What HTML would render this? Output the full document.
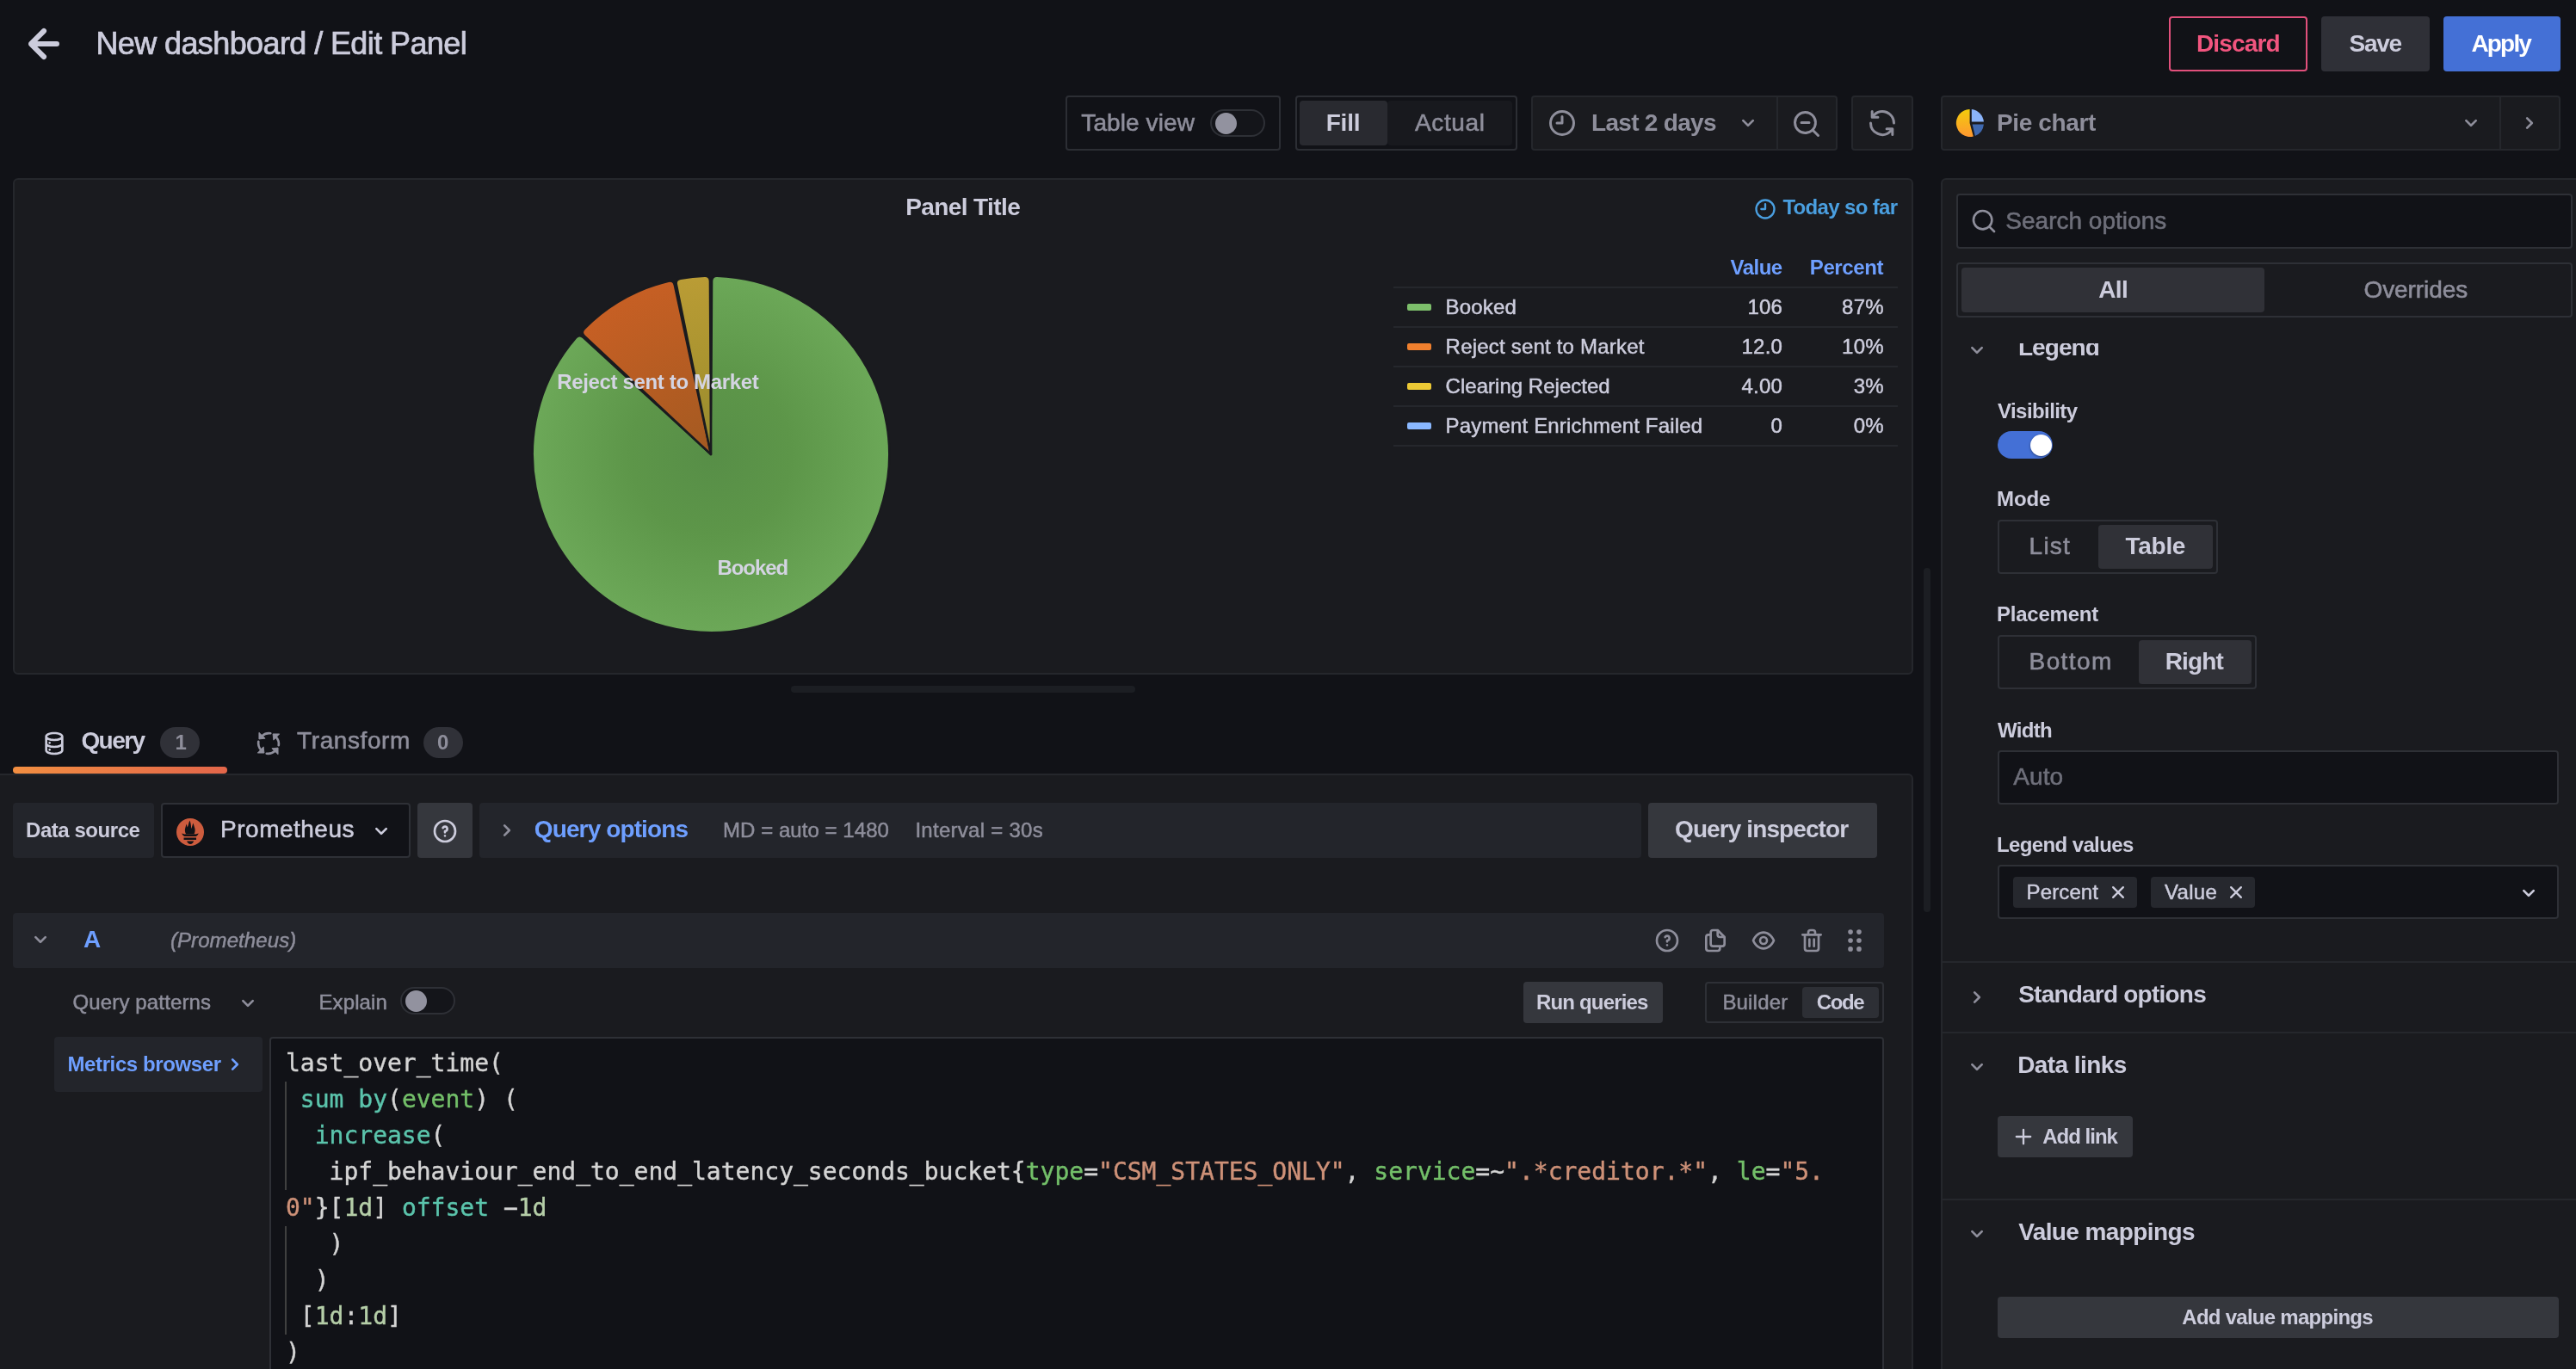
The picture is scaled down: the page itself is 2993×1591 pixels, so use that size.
<!DOCTYPE html>
<html lang="en">
<head>
<meta charset="utf-8">
<title>New dashboard / Edit Panel - Grafana</title>
<style>
html,body{margin:0;padding:0;background:#111217;}
body{width:2993px;height:1591px;overflow:hidden;position:relative;font-family:"Liberation Sans",sans-serif;color:#ccccdc;}
#app{will-change:transform;position:absolute;left:0;top:0;width:2993px;height:1591px;overflow:hidden;}
.b{position:absolute;box-sizing:border-box;}
.i{position:absolute;display:block;overflow:visible;}
.t{-webkit-text-stroke:0.02em currentColor;position:absolute;white-space:pre;line-height:1;margin:0;font-weight:400;font-family:"Liberation Sans",sans-serif;color:#ccccdc;}
.m{font-weight:700;-webkit-text-stroke:0;}
.bd{font-weight:700;-webkit-text-stroke:0;}
.it{font-style:italic;}
.mo{font-family:"DejaVu Sans Mono","Liberation Mono",monospace;}
.code{position:absolute;margin:0;font-family:"DejaVu Sans Mono","Liberation Mono",monospace;font-size:28px;line-height:42px;color:#d4d4d4;white-space:pre;letter-spacing:0;-webkit-text-stroke:0.4px currentColor;}
.code div{height:42px;}
.mn{display:inline-block;transform:scaleX(2);}

</style>
</head>
<body>
<div id="app">
<svg class="i" style="left:15px;top:15px" width="72" height="72" viewBox="0 0 24 24" fill="#ccccdc" ><path d="M17,11H9.41l3.3-3.29a1,1,0,1,0-1.42-1.42l-5,5a1,1,0,0,0-.21.33,1,1,0,0,0,0,.76,1,1,0,0,0,.21.33l5,5a1,1,0,0,0,1.42,0,1,1,0,0,0,0-1.42L9.41,13H17a1,1,0,0,0,0-2Z"/></svg>
<h1 class="t" style="left:111.4px;top:32.5px;font-size:36px;letter-spacing:-0.60px;">New dashboard / Edit Panel</h1>
<div class="b" style="left:2520px;top:19px;width:161px;height:64px;border:2px solid #e2507c;border-radius:4px;"></div>
<span class="t m" style="left:2552.0px;top:36.6px;font-size:28px;letter-spacing:-0.85px;color:#f2557f;">Discard</span>
<div class="b" style="left:2697px;top:19px;width:126px;height:64px;background:#2f3037;border-radius:4px;"></div>
<span class="t m" style="left:2729.6px;top:36.6px;font-size:28px;letter-spacing:-1.34px;">Save</span>
<div class="b" style="left:2839px;top:19px;width:136px;height:64px;background:#4470d6;border-radius:4px;"></div>
<span class="t m" style="left:2871.5px;top:36.6px;font-size:28px;letter-spacing:-1.85px;color:#ffffff;">Apply</span>
<div class="b" style="left:1238px;top:111px;width:250px;height:64px;border:2px solid #2c2e34;border-radius:4px;"></div>
<span class="t" style="left:1256.3px;top:128.9px;font-size:28px;letter-spacing:0.10px;color:#8e8e9b;">Table view</span>
<div class="b" style="left:1406px;top:127px;width:64px;height:32px;background:#14151a;border:2px solid #2e3036;border-radius:16px;"></div>
<div class="b" style="left:1411.5px;top:130.5px;width:25px;height:25px;border-radius:50%;background:#92929f"></div>
<div class="b" style="left:1505px;top:111px;width:258px;height:64px;border:2px solid #2c2e34;border-radius:4px;"></div>
<div class="b" style="left:1510px;top:117px;width:102px;height:52px;background:#292a30;border-radius:4px;"></div>
<div class="b" style="left:1612px;top:117px;width:145px;height:52px;background:#18191e;border-radius:4px;"></div>
<span class="t m" style="left:1540.7px;top:128.9px;font-size:28px;letter-spacing:-0.22px;">Fill</span>
<span class="t" style="left:1644.0px;top:128.9px;font-size:28px;letter-spacing:0.63px;color:#8e8e9b;">Actual</span>
<div class="b" style="left:1779px;top:111px;width:287px;height:64px;background:#1a1b1f;border:2px solid #25272c;border-radius:4px 0 0 4px;"></div>
<div class="b" style="left:2066px;top:111px;width:69px;height:64px;background:#1a1b1f;border:2px solid #25272c;border-radius:0 4px 4px 0;border-left:none;"></div>
<svg class="i" style="left:1797.0px;top:125.0px" width="36" height="36" viewBox="0 0 24 24" fill="#8e8e9b" ><path d="M12,2A10,10,0,1,0,22,12,10.01114,10.01114,0,0,0,12,2Zm0,18a8,8,0,1,1,8-8A8.00917,8.00917,0,0,1,12,20ZM12,6a.99974.99974,0,0,0-1,1v4H8a1,1,0,0,0,0,2h4a.99974.99974,0,0,0,1-1V7A.99974.99974,0,0,0,12,6Z"/></svg>
<span class="t m" style="left:1849.0px;top:128.9px;font-size:28px;letter-spacing:-0.70px;color:#8e8e9b;">Last 2 days</span>
<svg class="i" style="left:2015.0px;top:127.0px" width="32" height="32" viewBox="0 0 24 24" fill="#8e8e9b" ><path d="M17,9.17a1,1,0,0,0-1.41,0L12,12.71,8.46,9.17a1,1,0,0,0-1.41,0,1,1,0,0,0,0,1.42l4.24,4.24a1,1,0,0,0,1.42,0L17,10.59A1,1,0,0,0,17,9.17Z"/></svg>
<svg class="i" style="left:2081.0px;top:125.5px" width="36" height="36" viewBox="0 0 24 24" fill="#8e8e9b" ><path d="M21.71,20.29,18,16.61A9,9,0,1,0,16.61,18l3.68,3.68a1,1,0,0,0,1.42,0A1,1,0,0,0,21.71,20.29ZM11,18a7,7,0,1,1,7-7A7,7,0,0,1,11,18Zm3-8H8a1,1,0,0,0,0,2h6a1,1,0,0,0,0-2Z"/></svg>
<div class="b" style="left:2151px;top:111px;width:72px;height:64px;background:#1a1b1f;border:2px solid #25272c;border-radius:4px;"></div>
<svg class="i" style="left:2169.0px;top:125.0px" width="36" height="36" viewBox="0 0 24 24" fill="#8e8e9b" ><path d="M19.91,15.51H15.38a1,1,0,0,0,0,2h2.4A8,8,0,0,1,4,12a1,1,0,0,0-2,0,10,10,0,0,0,16.88,7.23V21a1,1,0,0,0,2,0V16.5A1,1,0,0,0,19.91,15.51ZM12,2A10,10,0,0,0,5.12,4.77V3a1,1,0,0,0-2,0V7.5a1,1,0,0,0,1,1h4.5a1,1,0,0,0,0-2H6.22A8,8,0,0,1,20,12a1,1,0,0,0,2,0A10,10,0,0,0,12,2Z"/></svg>
<div class="b" style="left:2255px;top:111px;width:651px;height:64px;background:#1a1b1f;border:2px solid #25272c;border-radius:4px 0 0 4px;"></div>
<div class="b" style="left:2906px;top:111px;width:69px;height:64px;background:#1a1b1f;border:2px solid #25272c;border-radius:0 4px 4px 0;border-left:none;"></div>
<svg class="i" style="left:2273px;top:127px" width="32" height="32" viewBox="0 0 32 32">
<defs><linearGradient id="pg" x1="0" y1="0" x2="0" y2="1"><stop offset="0" stop-color="#f2cc0c"/><stop offset="1" stop-color="#ff9830"/></linearGradient></defs>
<path d="M15.600,16 L15.600,0 A16,16 0 1 0 19.800,31.500 Z" fill="url(#pg)"/>
<path d="M17.800,14.600 L17.800,0.100 A16,16 0 0 1 31.900,14.600 Z" fill="#8ab4fa"/>
<path d="M18.600,17.500 L31.900,17.500 A16,16 0 0 1 21.800,30.900 Z" fill="#3f69b0"/>
</svg>
<span class="t m" style="left:2320.0px;top:128.9px;font-size:28px;letter-spacing:-0.37px;color:#8e8e9b;">Pie chart</span>
<svg class="i" style="left:2854.6px;top:127.0px" width="32" height="32" viewBox="0 0 24 24" fill="#8e8e9b" ><path d="M17,9.17a1,1,0,0,0-1.41,0L12,12.71,8.46,9.17a1,1,0,0,0-1.41,0,1,1,0,0,0,0,1.42l4.24,4.24a1,1,0,0,0,1.42,0L17,10.59A1,1,0,0,0,17,9.17Z"/></svg>
<svg class="i" style="left:2922.8px;top:127.0px" width="32" height="32" viewBox="0 0 24 24" fill="#8e8e9b" ><path d="M14.83,11.29,10.59,7.05a1,1,0,0,0-1.42,0,1,1,0,0,0,0,1.41L12.71,12,9.17,15.54a1,1,0,0,0,0,1.41,1,1,0,0,0,.71.29,1,1,0,0,0,.71-.29l4.24-4.24A1,1,0,0,0,14.83,11.29Z"/></svg>
<div class="b" style="left:15px;top:207px;width:2208px;height:577px;background:#1a1b1f;border:2px solid #25272c;border-radius:6px;"></div>
<h2 class="t m" style="left:1052.2px;top:226.7px;font-size:28px;letter-spacing:-0.60px;">Panel Title</h2>
<svg class="i" style="left:2037.0px;top:229.0px" width="28" height="28" viewBox="0 0 24 24" fill="#4a9fe0" ><path d="M12,2A10,10,0,1,0,22,12,10.01114,10.01114,0,0,0,12,2Zm0,18a8,8,0,1,1,8-8A8.00917,8.00917,0,0,1,12,20ZM12,6a.99974.99974,0,0,0-1,1v4H8a1,1,0,0,0,0,2h4a.99974.99974,0,0,0,1-1V7A.99974.99974,0,0,0,12,6Z"/></svg>
<span class="t m" style="left:2071.4px;top:228.7px;font-size:24px;letter-spacing:-0.66px;color:#4a9fe0;">Today so far</span>
<svg class="i" style="left:606px;top:308px" width="440" height="440" viewBox="606 308 440 440"><defs><radialGradient id="g1" gradientUnits="userSpaceOnUse" cx="826" cy="528" r="207.2"><stop offset="0" stop-color="#578e47"/><stop offset="0.45" stop-color="#5d9649"/><stop offset="1" stop-color="#6ca858"/></radialGradient><radialGradient id="g2" gradientUnits="userSpaceOnUse" cx="826" cy="528" r="207.2"><stop offset="0" stop-color="#a35a21"/><stop offset="0.45" stop-color="#b35c22"/><stop offset="1" stop-color="#c65f24"/></radialGradient><radialGradient id="g3" gradientUnits="userSpaceOnUse" cx="826" cy="528" r="207.2"><stop offset="0" stop-color="#948a2f"/><stop offset="0.45" stop-color="#a8932f"/><stop offset="1" stop-color="#ba9c35"/></radialGradient></defs><g stroke="#1a1b1f" stroke-width="2.4" stroke-linejoin="round"><path d="M826,528 L827.12,326.80 Q827.16,320.80 833.16,320.92 A207.2,207.2 0 1 1 669.17,392.59 Q673.16,388.11 677.58,392.16 Z" fill="url(#g1)"/><path d="M826,528 L679.11,390.51 Q674.73,386.41 678.89,382.09 A207.2,207.2 0 0 1 776.64,326.77 Q782.48,325.42 783.74,331.29 Z" fill="url(#g2)"/><path d="M826,528 L785.94,330.83 Q784.75,324.95 790.65,323.84 A207.2,207.2 0 0 1 818.84,320.92 Q824.84,320.80 824.88,326.80 Z" fill="url(#g3)"/></g></svg>
<span class="t m" style="left:647.3px;top:432.3px;font-size:24px;letter-spacing:-0.35px;color:#d4d4e2;">Reject sent to Market</span>
<span class="t m" style="left:833.5px;top:647.5px;font-size:24px;letter-spacing:-1.07px;color:#d4d4e2;">Booked</span>
<span class="t m" style="left:2010.5px;top:298.7px;font-size:24px;letter-spacing:-0.51px;color:#6e9fff;">Value</span>
<span class="t m" style="left:2102.8px;top:298.7px;font-size:24px;letter-spacing:-0.39px;color:#6e9fff;">Percent</span>
<div class="b" style="left:1619px;top:333px;width:586px;height:2px;background:#25272c;"></div>
<div class="b" style="left:1635px;top:353px;width:28px;height:8px;background:#7dbf6b;border-radius:2px;"></div>
<span class="t" style="left:1679.6px;top:344.7px;font-size:24px;letter-spacing:0.19px;">Booked</span>
<span class="t" style="left:2030.4px;top:344.7px;font-size:24px;letter-spacing:0.24px;">106</span>
<span class="t" style="left:2140.1px;top:344.7px;font-size:24px;letter-spacing:0.24px;">87%</span>
<div class="b" style="left:1619px;top:379px;width:586px;height:2px;background:#25272c;"></div>
<div class="b" style="left:1635px;top:399px;width:28px;height:8px;background:#f0802e;border-radius:2px;"></div>
<span class="t" style="left:1679.6px;top:390.7px;font-size:24px;letter-spacing:0.20px;">Reject sent to Market</span>
<span class="t" style="left:2023.5px;top:390.7px;font-size:24px;letter-spacing:0.24px;">12.0</span>
<span class="t" style="left:2140.1px;top:390.7px;font-size:24px;letter-spacing:0.24px;">10%</span>
<div class="b" style="left:1619px;top:425px;width:586px;height:2px;background:#25272c;"></div>
<div class="b" style="left:1635px;top:445px;width:28px;height:8px;background:#ecc935;border-radius:2px;"></div>
<span class="t" style="left:1679.6px;top:436.7px;font-size:24px;letter-spacing:0.02px;">Clearing Rejected</span>
<span class="t" style="left:2023.5px;top:436.7px;font-size:24px;letter-spacing:0.24px;">4.00</span>
<span class="t" style="left:2153.7px;top:436.7px;font-size:24px;letter-spacing:0.24px;">3%</span>
<div class="b" style="left:1619px;top:471px;width:586px;height:2px;background:#25272c;"></div>
<div class="b" style="left:1635px;top:491px;width:28px;height:8px;background:#8ab8ff;border-radius:2px;"></div>
<span class="t" style="left:1679.6px;top:482.7px;font-size:24px;letter-spacing:0.15px;">Payment Enrichment Failed</span>
<span class="t" style="left:2057.6px;top:482.7px;font-size:24px;">0</span>
<span class="t" style="left:2153.7px;top:482.7px;font-size:24px;letter-spacing:0.24px;">0%</span>
<div class="b" style="left:1619px;top:517px;width:586px;height:2px;background:#25272c;"></div>
<div class="b" style="left:919px;top:797px;width:400px;height:8px;background:#1c1e23;border-radius:4px;"></div>
<div class="b" style="left:2235px;top:660px;width:8px;height:400px;background:#1c1e23;border-radius:4px;"></div>
<svg class="i" style="left:47.2px;top:847.5px" width="32" height="32" viewBox="0 0 24 24" fill="#ccccdc" ><path d="M8,16.5a1,1,0,1,0,1,1A1,1,0,0,0,8,16.5ZM12,2C8,2,4,3.37,4,6V18c0,2.63,4,4,8,4s8-1.37,8-4V6C20,3.37,16,2,12,2Zm6,16c0,.71-2.28,2-6,2s-6-1.29-6-2V14.73A13.16,13.16,0,0,0,12,16a13.16,13.16,0,0,0,6-1.27Zm0-6c0,.71-2.28,2-6,2s-6-1.29-6-2V8.73A13.16,13.16,0,0,0,12,10a13.16,13.16,0,0,0,6-1.27ZM12,8C8.28,8,6,6.71,6,6s2.28-2,6-2,6,1.29,6,2S15.72,8,12,8ZM8,10.5a1,1,0,1,0,1,1A1,1,0,0,0,8,10.5Z"/></svg>
<span class="t m" style="left:94.4px;top:847.1px;font-size:28px;letter-spacing:-1.56px;">Query</span>
<div class="b" style="left:186px;top:845px;width:46px;height:36px;background:#303138;border-radius:18px;"></div>
<span class="t m" style="left:203.5px;top:851.2px;font-size:24px;color:#8e8e9b;">1</span>
<div class="b" style="left:15px;top:891px;width:249px;height:8px;border-radius:4px;background:linear-gradient(270deg,#e3664a 0%,#f28e41 100%)"></div>
<svg class="i" style="left:296px;top:848px;color:#8e8e9b" width="32" height="32" viewBox="0 0 24 24"><g transform="rotate(0 12 12)"><path d="M13.7,3.2A9,9,0,0,0,6.4,5.4" fill="none" stroke="currentColor" stroke-width="2" stroke-linecap="round"/><path d="M3.7,2.5V8.2L9.1,7.6Z" fill="currentColor" stroke="currentColor" stroke-width="0.7" stroke-linejoin="round"/></g><g transform="rotate(90 12 12)"><path d="M13.7,3.2A9,9,0,0,0,6.4,5.4" fill="none" stroke="currentColor" stroke-width="2" stroke-linecap="round"/><path d="M3.7,2.5V8.2L9.1,7.6Z" fill="currentColor" stroke="currentColor" stroke-width="0.7" stroke-linejoin="round"/></g><g transform="rotate(180 12 12)"><path d="M13.7,3.2A9,9,0,0,0,6.4,5.4" fill="none" stroke="currentColor" stroke-width="2" stroke-linecap="round"/><path d="M3.7,2.5V8.2L9.1,7.6Z" fill="currentColor" stroke="currentColor" stroke-width="0.7" stroke-linejoin="round"/></g><g transform="rotate(270 12 12)"><path d="M13.7,3.2A9,9,0,0,0,6.4,5.4" fill="none" stroke="currentColor" stroke-width="2" stroke-linecap="round"/><path d="M3.7,2.5V8.2L9.1,7.6Z" fill="currentColor" stroke="currentColor" stroke-width="0.7" stroke-linejoin="round"/></g></svg>
<span class="t" style="left:345.1px;top:847.1px;font-size:28px;letter-spacing:0.58px;color:#8e8e9b;">Transform</span>
<div class="b" style="left:492px;top:845px;width:46px;height:36px;background:#303138;border-radius:18px;"></div>
<span class="t m" style="left:508.0px;top:851.2px;font-size:24px;color:#8e8e9b;">0</span>
<div class="b" style="left:-10px;top:899px;width:2233px;height:721px;background:#1a1b1f;border:2px solid #25272c;border-radius:6px;"></div>
<div class="b" style="left:15px;top:933px;width:164px;height:64px;background:#23252b;border-radius:4px;"></div>
<span class="t m" style="left:30.0px;top:953.1px;font-size:24px;letter-spacing:-0.45px;">Data source</span>
<div class="b" style="left:187px;top:933px;width:290px;height:64px;background:#111217;border:2px solid #2e3036;border-radius:4px;"></div>
<svg class="i" style="left:205px;top:950.800px" width="32" height="32" viewBox="0 0 32 32">
<circle cx="16" cy="16" r="16" fill="#cd5c3e"/>
<g fill="#111217">
<path d="M15.5,2.5C16.2,4.500,16.600,6,16.900,8.500C17,9.500,17.200,11.500,17.500,12C18,10,18.600,7.500,19.400,5.400C20,7.500,20.800,9.500,21.300,11.500C21.800,13.500,21.800,16,20.600,18H11C9.800,16,9.600,13.500,10.200,11.500C10.700,9.800,11.100,8,11.500,6.400C12,7.500,12.300,9,12.600,10.500C13.200,9.600,13.600,8.500,13.900,7.300C14.300,5.700,14.800,4,15.500,2.500Z"/>
<path d="M6.250,17.600C8,18.400,9.500,18.600,10.800,18.200H20.900C22.500,18.600,24,18.400,25.700,17.600C25,19.500,24,20.900,22.500,20.900H9.500C8,20.900,7,19.500,6.250,17.600Z"/>
<rect x="8.550" y="22.500" width="14.450" height="2.500"/>
<path d="M12.200,26.600H20.100C19.600,28.800,18,30.100,16.150,30.100C14.300,30.100,12.700,28.800,12.200,26.600Z"/>
</g>
</svg>
<span class="t" style="left:256.1px;top:950.3px;font-size:28px;letter-spacing:0.49px;">Prometheus</span>
<svg class="i" style="left:427.0px;top:950.0px" width="32" height="32" viewBox="0 0 24 24" fill="#ccccdc" ><path d="M17,9.17a1,1,0,0,0-1.41,0L12,12.71,8.46,9.17a1,1,0,0,0-1.41,0,1,1,0,0,0,0,1.42l4.24,4.24a1,1,0,0,0,1.42,0L17,10.59A1,1,0,0,0,17,9.17Z"/></svg>
<div class="b" style="left:485px;top:933px;width:64px;height:64px;background:#35373d;border-radius:4px;"></div>
<svg class="i" style="left:501.0px;top:949.5px" width="32" height="32" viewBox="0 0 24 24" fill="#ccccdc" ><path d="M11.29,15.29a1.58,1.58,0,0,0-.12.15.76.76,0,0,0-.09.18.64.64,0,0,0-.06.18,1.36,1.36,0,0,0,0,.2.84.84,0,0,0,.08.38.9.9,0,0,0,.54.54.94.94,0,0,0,.76,0,.9.9,0,0,0,.54-.54A1,1,0,0,0,13,16a1,1,0,0,0-.29-.71A1,1,0,0,0,11.29,15.29ZM12,2A10,10,0,1,0,22,12,10,10,0,0,0,12,2Zm0,18a8,8,0,1,1,8-8A8,8,0,0,1,12,20ZM12,7A3,3,0,0,0,9.4,8.5a1,1,0,1,0,1.73,1A1,1,0,0,1,12,9a1,1,0,0,1,0,2,1,1,0,0,0-1,1v1a1,1,0,0,0,2,0v-.18A3,3,0,0,0,12,7Z"/></svg>
<div class="b" style="left:557px;top:933px;width:1350px;height:64px;background:#23252b;border-radius:4px;"></div>
<svg class="i" style="left:573.0px;top:949.0px" width="32" height="32" viewBox="0 0 24 24" fill="#8e8e9b" ><path d="M14.83,11.29,10.59,7.05a1,1,0,0,0-1.42,0,1,1,0,0,0,0,1.41L12.71,12,9.17,15.54a1,1,0,0,0,0,1.41,1,1,0,0,0,.71.29,1,1,0,0,0,.71-.29l4.24-4.24A1,1,0,0,0,14.83,11.29Z"/></svg>
<span class="t m" style="left:620.8px;top:949.9px;font-size:28px;letter-spacing:-0.88px;color:#6e9fff;">Query options</span>
<span class="t" style="left:840.0px;top:952.9px;font-size:24px;letter-spacing:0.05px;color:#8e8e9b;">MD = auto = 1480</span>
<span class="t" style="left:1063.4px;top:952.9px;font-size:24px;letter-spacing:0.27px;color:#8e8e9b;">Interval = 30s</span>
<div class="b" style="left:1915px;top:933px;width:266px;height:64px;background:#35373d;border-radius:4px;"></div>
<span class="t m" style="left:1946.0px;top:949.9px;font-size:28px;letter-spacing:-0.90px;">Query inspector</span>
<div class="b" style="left:15px;top:1061px;width:2174px;height:64px;background:#23252b;border-radius:4px;"></div>
<svg class="i" style="left:31.0px;top:1076.0px" width="32" height="32" viewBox="0 0 24 24" fill="#8e8e9b" ><path d="M17,9.17a1,1,0,0,0-1.41,0L12,12.71,8.46,9.17a1,1,0,0,0-1.41,0,1,1,0,0,0,0,1.42l4.24,4.24a1,1,0,0,0,1.42,0L17,10.59A1,1,0,0,0,17,9.17Z"/></svg>
<span class="t m" style="left:97.0px;top:1078.3px;font-size:28px;color:#6e9fff;">A</span>
<span class="t it" style="left:197.9px;top:1081.2px;font-size:24px;letter-spacing:0.09px;color:#8e8e9b;">(Prometheus)</span>
<svg class="i" style="left:1920.8px;top:1076.8px" width="32" height="32" viewBox="0 0 24 24" fill="#8e8e9b" ><path d="M11.29,15.29a1.58,1.58,0,0,0-.12.15.76.76,0,0,0-.09.18.64.64,0,0,0-.06.18,1.36,1.36,0,0,0,0,.2.84.84,0,0,0,.08.38.9.9,0,0,0,.54.54.94.94,0,0,0,.76,0,.9.9,0,0,0,.54-.54A1,1,0,0,0,13,16a1,1,0,0,0-.29-.71A1,1,0,0,0,11.29,15.29ZM12,2A10,10,0,1,0,22,12,10,10,0,0,0,12,2Zm0,18a8,8,0,1,1,8-8A8,8,0,0,1,12,20ZM12,7A3,3,0,0,0,9.4,8.5a1,1,0,1,0,1.73,1A1,1,0,0,1,12,9a1,1,0,0,1,0,2,1,1,0,0,0-1,1v1a1,1,0,0,0,2,0v-.18A3,3,0,0,0,12,7Z"/></svg>
<svg class="i" style="left:1977.0px;top:1076.8px" width="32" height="32" viewBox="0 0 24 24" fill="#8e8e9b" ><path d="M21,8.94a1.31,1.31,0,0,0-.06-.27l0-.09a1.07,1.07,0,0,0-.19-.28h0l-6-6h0a1.07,1.07,0,0,0-.28-.19.32.32,0,0,0-.09,0A.88.88,0,0,0,14.05,2H10A3,3,0,0,0,7,5V6H6A3,3,0,0,0,3,9V19a3,3,0,0,0,3,3h8a3,3,0,0,0,3-3V18h1a3,3,0,0,0,3-3V9S21,9,21,8.94ZM15,5.41,17.59,8H16a1,1,0,0,1-1-1ZM15,19a1,1,0,0,1-1,1H6a1,1,0,0,1-1-1V9A1,1,0,0,1,6,8H7v7a3,3,0,0,0,3,3h5Zm4-4a1,1,0,0,1-1,1H10a1,1,0,0,1-1-1V5a1,1,0,0,1,1-1h3V7a3,3,0,0,0,3,3h3Z"/></svg>
<svg class="i" style="left:2033.0px;top:1076.8px" width="32" height="32" viewBox="0 0 24 24" fill="#8e8e9b" ><path d="M21.92,11.6C19.9,6.91,16.1,4,12,4S4.1,6.91,2.08,11.6a1,1,0,0,0,0,.8C4.1,17.09,7.9,20,12,20s7.9-2.91,9.92-7.6A1,1,0,0,0,21.92,11.6ZM12,18c-3.17,0-6.17-2.29-7.9-6C5.83,8.29,8.83,6,12,6s6.17,2.29,7.9,6C18.17,15.71,15.17,18,12,18ZM12,8a4,4,0,1,0,4,4A4,4,0,0,0,12,8Zm0,6a2,2,0,1,1,2-2A2,2,0,0,1,12,14Z"/></svg>
<svg class="i" style="left:2089.0px;top:1076.8px" width="32" height="32" viewBox="0 0 24 24" fill="#8e8e9b" ><path d="M10,18a1,1,0,0,0,1-1V11a1,1,0,0,0-2,0v6A1,1,0,0,0,10,18ZM20,6H16V5a3,3,0,0,0-3-3H11A3,3,0,0,0,8,5V6H4A1,1,0,0,0,4,8H5V19a3,3,0,0,0,3,3h8a3,3,0,0,0,3-3V8h1a1,1,0,0,0,0-2ZM10,5a1,1,0,0,1,1-1h2a1,1,0,0,1,1,1V6H10Zm7,14a1,1,0,0,1-1,1H8a1,1,0,0,1-1-1V8H17Zm-3-1a1,1,0,0,0,1-1V11a1,1,0,0,0-2,0v6A1,1,0,0,0,14,18Z"/></svg>
<svg class="i" style="left:2138.0px;top:1076.0px" width="34" height="34" viewBox="0 0 24 24" fill="#8e8e9b" ><path d="M8.5,10a2,2,0,1,0,2,2A2,2,0,0,0,8.5,10Zm0,7a2,2,0,1,0,2,2A2,2,0,0,0,8.5,17Zm7-10a2,2,0,1,0-2-2A2,2,0,0,0,15.5,7Zm-7-4a2,2,0,1,0,2,2A2,2,0,0,0,8.5,3Zm7,14a2,2,0,1,0,2,2A2,2,0,0,0,15.5,17Zm0-7a2,2,0,1,0,2,2A2,2,0,0,0,15.5,10Z"/></svg>
<span class="t" style="left:84.5px;top:1153.0px;font-size:24px;letter-spacing:0.14px;color:#8e8e9b;">Query patterns</span>
<svg class="i" style="left:272.0px;top:1150.0px" width="32" height="32" viewBox="0 0 24 24" fill="#8e8e9b" ><path d="M17,9.17a1,1,0,0,0-1.41,0L12,12.71,8.46,9.17a1,1,0,0,0-1.41,0,1,1,0,0,0,0,1.42l4.24,4.24a1,1,0,0,0,1.42,0L17,10.59A1,1,0,0,0,17,9.17Z"/></svg>
<span class="t" style="left:370.4px;top:1153.0px;font-size:24px;letter-spacing:0.13px;color:#8e8e9b;">Explain</span>
<div class="b" style="left:465px;top:1147px;width:64px;height:32px;background:#14151a;border:2px solid #2e3036;border-radius:16px;"></div>
<div class="b" style="left:470.5px;top:1150.5px;width:25px;height:25px;border-radius:50%;background:#92929f"></div>
<div class="b" style="left:1770px;top:1141px;width:162px;height:48px;background:#35373d;border-radius:4px;"></div>
<span class="t m" style="left:1785.0px;top:1153.2px;font-size:24px;letter-spacing:-0.83px;">Run queries</span>
<div class="b" style="left:1980.5px;top:1141px;width:208.0px;height:48px;border:2px solid #2e3036;border-radius:4px;"></div>
<div class="b" style="left:2094px;top:1147px;width:89px;height:36px;background:#2d2f35;border-radius:4px;"></div>
<span class="t" style="left:2001.4px;top:1153.2px;font-size:24px;letter-spacing:0.18px;color:#8e8e9b;">Builder</span>
<span class="t m" style="left:2110.7px;top:1153.2px;font-size:24px;letter-spacing:-1.35px;">Code</span>
<div class="b" style="left:63px;top:1205px;width:242px;height:64px;background:#23252b;border-radius:4px;"></div>
<span class="t m" style="left:78.5px;top:1224.7px;font-size:24px;letter-spacing:-0.39px;color:#6e9fff;">Metrics browser</span>
<svg class="i" style="left:257.0px;top:1221.0px" width="32" height="32" viewBox="0 0 24 24" fill="#6e9fff" ><path d="M14.83,11.29,10.59,7.05a1,1,0,0,0-1.42,0,1,1,0,0,0,0,1.41L12.71,12,9.17,15.54a1,1,0,0,0,0,1.41,1,1,0,0,0,.71.29,1,1,0,0,0,.71-.29l4.24-4.24A1,1,0,0,0,14.83,11.29Z"/></svg>
<div class="b" style="left:313px;top:1205px;width:1876px;height:415px;background:#111217;border:2px solid #2e3036;border-radius:4px;"></div>
<div class="b" style="left:331px;top:1257px;width:2px;height:126px;background:#404040;"></div>
<div class="b" style="left:331px;top:1425px;width:2px;height:126px;background:#404040;"></div>
<pre class="code" style="left:332px;top:1215px"><div>last_over_time(</div><div> <span style="color:#5bc4ac">sum</span> <span style="color:#5bc4ac">by</span>(<span style="color:#73bf69">event</span>) (</div><div>  <span style="color:#5bc4ac">increase</span>(</div><div>   ipf_behaviour_end_to_end_latency_seconds_bucket{<span style="color:#73bf69">type</span>=<span style="color:#ce9178">"CSM_STATES_ONLY"</span>, <span style="color:#73bf69">service</span>=~<span style="color:#ce9178">".*creditor.*"</span>, <span style="color:#73bf69">le</span>=<span style="color:#ce9178">"5.</span></div><div><span style="color:#ce9178">0"</span>}[<span style="color:#b5cea8">1d</span>] <span style="color:#5bc4ac">offset</span> <span class="mn">-</span><span style="color:#b5cea8">1d</span></div><div>   )</div><div>  )</div><div> [<span style="color:#b5cea8">1d</span>:<span style="color:#b5cea8">1d</span>]</div><div>)</div></pre>
<div class="b" style="left:2255px;top:207px;width:755px;height:1413px;background:#1a1b1f;border:2px solid #25272c;border-radius:6px;"></div>
<div class="b" style="left:2273px;top:225px;width:716px;height:64px;background:#111217;border:2px solid #2e3036;border-radius:4px;"></div>
<svg class="i" style="left:2288.5px;top:240.5px" width="32" height="32" viewBox="0 0 24 24" fill="#8e8e9b" ><path d="M21.71,20.29,18,16.61A9,9,0,1,0,16.61,18l3.68,3.68a1,1,0,0,0,1.42,0A1,1,0,0,0,21.71,20.29ZM11,18a7,7,0,1,1,7-7A7,7,0,0,1,11,18Z"/></svg>
<span class="t" style="left:2330.3px;top:242.8px;font-size:28px;letter-spacing:0.01px;color:#6e6f7a;">Search options</span>
<div class="b" style="left:2273px;top:305px;width:716px;height:64px;border:2px solid #2e3036;border-radius:4px;"></div>
<div class="b" style="left:2279px;top:311px;width:352px;height:52px;background:#303137;border-radius:4px;"></div>
<span class="t m" style="left:2438.2px;top:322.5px;font-size:28px;letter-spacing:-0.60px;">All</span>
<span class="t" style="left:2746.5px;top:322.5px;font-size:28px;letter-spacing:-0.09px;color:#8e8e9b;">Overrides</span>
<div class="b" style="left:2257px;top:399px;width:736px;height:1192px;overflow:hidden"><div class="b" style="left:-2257px;top:-399px;width:2993px;height:1591px">
<svg class="i" style="left:2280.8px;top:391.0px" width="32" height="32" viewBox="0 0 24 24" fill="#8e8e9b" ><path d="M17,9.17a1,1,0,0,0-1.41,0L12,12.71,8.46,9.17a1,1,0,0,0-1.41,0,1,1,0,0,0,0,1.42l4.24,4.24a1,1,0,0,0,1.42,0L17,10.59A1,1,0,0,0,17,9.17Z"/></svg>
<span class="t m" style="left:2344.9px;top:390.3px;font-size:28px;letter-spacing:-0.93px;">Legend</span>
</div></div>
<span class="t m" style="left:2321.0px;top:466.1px;font-size:24px;letter-spacing:-0.57px;">Visibility</span>
<div class="b" style="left:2321px;top:501px;width:64px;height:32px;background:#4470d6;border-radius:16px;"></div>
<div class="b" style="left:2358.5px;top:504.5px;width:25px;height:25px;border-radius:50%;background:#fff;box-shadow:0 1px 3px rgba(0,0,0,.4)"></div>
<span class="t m" style="left:2320.0px;top:567.7px;font-size:24px;letter-spacing:-0.10px;">Mode</span>
<div class="b" style="left:2321px;top:603.5px;width:256px;height:63.0px;border:2px solid #2e3036;border-radius:4px;"></div>
<div class="b" style="left:2438px;top:609.5px;width:133px;height:51.0px;background:#303137;border-radius:4px;"></div>
<span class="t" style="left:2357.6px;top:621.3px;font-size:28px;letter-spacing:1.22px;color:#8e8e9b;">List</span>
<span class="t m" style="left:2469.6px;top:621.3px;font-size:28px;letter-spacing:-0.30px;">Table</span>
<span class="t m" style="left:2320.0px;top:702.1px;font-size:24px;letter-spacing:-0.22px;">Placement</span>
<div class="b" style="left:2321px;top:737.5px;width:301px;height:63.0px;border:2px solid #2e3036;border-radius:4px;"></div>
<div class="b" style="left:2485px;top:743.5px;width:131px;height:51.0px;background:#303137;border-radius:4px;"></div>
<span class="t" style="left:2357.6px;top:755.3px;font-size:28px;letter-spacing:1.39px;color:#8e8e9b;">Bottom</span>
<span class="t m" style="left:2515.8px;top:755.3px;font-size:28px;letter-spacing:-0.90px;">Right</span>
<span class="t m" style="left:2321.0px;top:836.7px;font-size:24px;letter-spacing:-0.69px;">Width</span>
<div class="b" style="left:2321px;top:871.5px;width:652px;height:63.0px;background:#111217;border:2px solid #2e3036;border-radius:4px;"></div>
<span class="t" style="left:2339.3px;top:889.3px;font-size:28px;letter-spacing:0.07px;color:#6e6f7a;">Auto</span>
<span class="t m" style="left:2320.0px;top:970.4px;font-size:24px;letter-spacing:-0.62px;">Legend values</span>
<div class="b" style="left:2321px;top:1005px;width:652px;height:63px;background:#111217;border:2px solid #2e3036;border-radius:4px;"></div>
<div class="b" style="left:2339px;top:1019px;width:144px;height:36px;background:#26282e;border-radius:4px;"></div>
<span class="t" style="left:2354.6px;top:1025.2px;font-size:24px;letter-spacing:0.11px;">Percent</span>
<svg class="i" style="left:2447.0px;top:1023.0px" width="28" height="28" viewBox="0 0 24 24" fill="#ccccdc" ><path d="M13.41,12l4.3-4.29a1,1,0,1,0-1.42-1.42L12,10.59,7.71,6.29A1,1,0,0,0,6.29,7.71L10.59,12l-4.3,4.29a1,1,0,0,0,0,1.42,1,1,0,0,0,1.42,0L12,13.41l4.29,4.3a1,1,0,0,0,1.42,0,1,1,0,0,0,0-1.42Z"/></svg>
<div class="b" style="left:2499.4px;top:1019px;width:120.59999999999991px;height:36px;background:#26282e;border-radius:4px;"></div>
<span class="t" style="left:2515.1px;top:1025.2px;font-size:24px;letter-spacing:0.27px;">Value</span>
<svg class="i" style="left:2584.0px;top:1023.0px" width="28" height="28" viewBox="0 0 24 24" fill="#ccccdc" ><path d="M13.41,12l4.3-4.29a1,1,0,1,0-1.42-1.42L12,10.59,7.71,6.29A1,1,0,0,0,6.29,7.71L10.59,12l-4.3,4.29a1,1,0,0,0,0,1.42,1,1,0,0,0,1.42,0L12,13.41l4.29,4.3a1,1,0,0,0,1.42,0,1,1,0,0,0,0-1.42Z"/></svg>
<svg class="i" style="left:2922.4px;top:1022.0px" width="32" height="32" viewBox="0 0 24 24" fill="#ccccdc" ><path d="M17,9.17a1,1,0,0,0-1.41,0L12,12.71,8.46,9.17a1,1,0,0,0-1.41,0,1,1,0,0,0,0,1.42l4.24,4.24a1,1,0,0,0,1.42,0L17,10.59A1,1,0,0,0,17,9.17Z"/></svg>
<div class="b" style="left:2257px;top:1116.5px;width:736px;height:2.0px;background:#25272c;"></div>
<svg class="i" style="left:2280.7px;top:1142.5px" width="32" height="32" viewBox="0 0 24 24" fill="#8e8e9b" ><path d="M14.83,11.29,10.59,7.05a1,1,0,0,0-1.42,0,1,1,0,0,0,0,1.41L12.71,12,9.17,15.54a1,1,0,0,0,0,1.41,1,1,0,0,0,.71.29,1,1,0,0,0,.71-.29l4.24-4.24A1,1,0,0,0,14.83,11.29Z"/></svg>
<span class="t m" style="left:2345.2px;top:1141.8px;font-size:28px;letter-spacing:-0.78px;">Standard options</span>
<div class="b" style="left:2257px;top:1198.5px;width:736px;height:2.0px;background:#25272c;"></div>
<svg class="i" style="left:2280.7px;top:1224.0px" width="32" height="32" viewBox="0 0 24 24" fill="#8e8e9b" ><path d="M17,9.17a1,1,0,0,0-1.41,0L12,12.71,8.46,9.17a1,1,0,0,0-1.41,0,1,1,0,0,0,0,1.42l4.24,4.24a1,1,0,0,0,1.42,0L17,10.59A1,1,0,0,0,17,9.17Z"/></svg>
<span class="t m" style="left:2344.2px;top:1224.3px;font-size:28px;letter-spacing:-0.56px;">Data links</span>
<div class="b" style="left:2321px;top:1297px;width:157px;height:48px;background:#35373d;border-radius:4px;"></div>
<svg class="i" style="left:2337.0px;top:1307.0px" width="28" height="28" viewBox="0 0 24 24" fill="#ccccdc" ><path d="M19,11H13V5a1,1,0,0,0-2,0v6H5a1,1,0,0,0,0,2h6v6a1,1,0,0,0,2,0V13h6a1,1,0,0,0,0-2Z"/></svg>
<span class="t m" style="left:2373.2px;top:1309.2px;font-size:24px;letter-spacing:-0.99px;">Add link</span>
<div class="b" style="left:2257px;top:1392.5px;width:736px;height:2.0px;background:#25272c;"></div>
<svg class="i" style="left:2280.7px;top:1418.0px" width="32" height="32" viewBox="0 0 24 24" fill="#8e8e9b" ><path d="M17,9.17a1,1,0,0,0-1.41,0L12,12.71,8.46,9.17a1,1,0,0,0-1.41,0,1,1,0,0,0,0,1.42l4.24,4.24a1,1,0,0,0,1.42,0L17,10.59A1,1,0,0,0,17,9.17Z"/></svg>
<span class="t m" style="left:2345.2px;top:1418.3px;font-size:28px;letter-spacing:-0.60px;">Value mappings</span>
<div class="b" style="left:2321px;top:1507px;width:652px;height:48px;background:#35373d;border-radius:4px;"></div>
<span class="t m" style="left:2535.3px;top:1519.2px;font-size:24px;letter-spacing:-0.73px;">Add value mappings</span>
</div>
</body>
</html>
